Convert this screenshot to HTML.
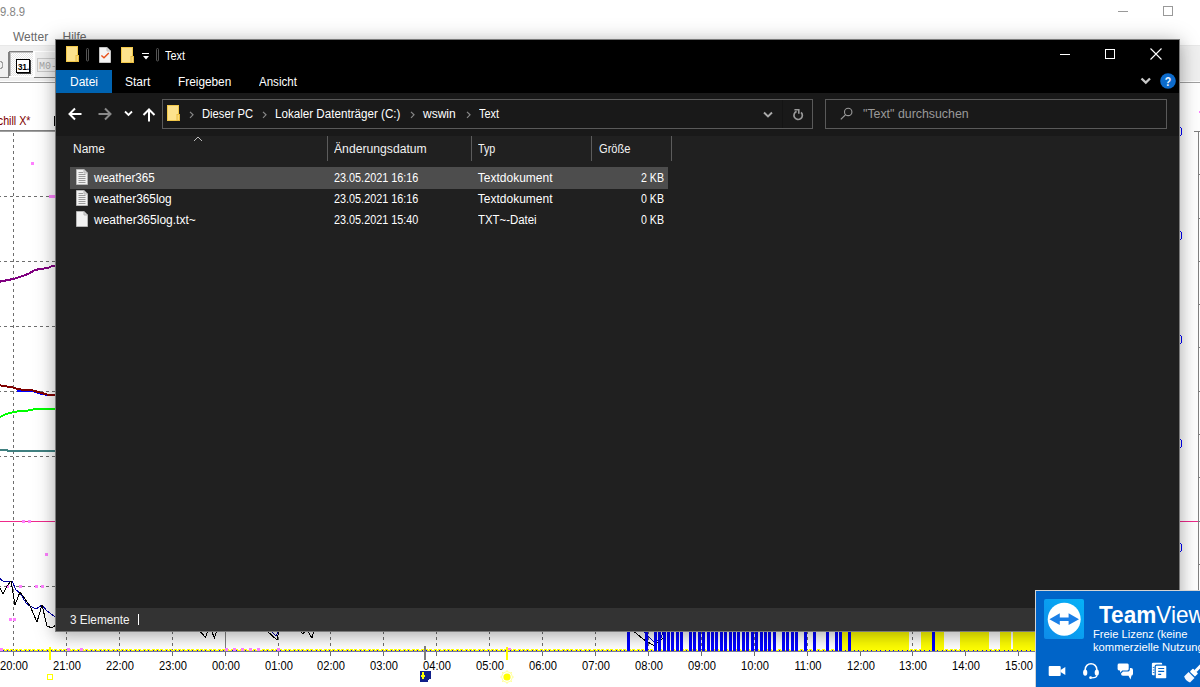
<!DOCTYPE html>
<html><head><meta charset="utf-8">
<style>
*{margin:0;padding:0;box-sizing:border-box}
html,body{width:1200px;height:687px;overflow:hidden;background:#fff;font-family:"Liberation Sans",sans-serif;}
.a{position:absolute;white-space:nowrap;overflow:visible}
#bg{position:absolute;left:0;top:0;width:1200px;height:687px;background:#fff;overflow:hidden}
#win{position:absolute;left:55px;top:39px;width:1125px;height:593px;background:#202020;border:1px solid #7a7a7a;box-shadow:0 2px 20px rgba(0,0,0,.28), 0 5px 12px rgba(0,0,0,.1)}
.t{position:absolute;white-space:nowrap;font-size:12px;line-height:14px}
</style></head><body>
<div id="bg">
<div class="a" style="left:-0.3px;top:5px;font-size:12px;line-height:14px;color:#858585;transform:scaleX(0.94);transform-origin:0 0">9.8.9</div>
<div class="a" style="left:1118px;top:11px;width:10px;height:1px;background:#999"></div>
<div class="a" style="left:1163px;top:6px;width:10px;height:10px;border:1px solid #999"></div>
<div class="a" style="left:13px;top:30px;font-size:12px;line-height:14px;color:#6a6a6a">Wetter</div>
<div class="a" style="left:62.5px;top:30px;font-size:12px;line-height:14px;color:#6a6a6a">Hilfe</div>
<div class="a" style="left:0;top:45px;width:1200px;height:37px;background:#f0f0f0;border-top:1px solid #e8e8e8"></div>
<div class="a" style="left:0;top:81px;width:1200px;height:1px;background:#fff"></div>
<div class="a" style="left:0;top:82px;width:1200px;height:1px;background:#a0a0a0"></div>
<svg class="a" style="left:0;top:0" width="1200" height="687" viewBox="0 0 1200 687" shape-rendering="crispEdges"><rect x="-5" y="52" width="13" height="25" fill="#f0f0f0"/><path d="M8.5 52V77.5H-5" fill="none" stroke="#808080"/><circle cx="-0.5" cy="65" r="3.5" fill="none" stroke="#a0a0a0"/><defs><pattern id="chk" width="2" height="2" patternUnits="userSpaceOnUse"><rect width="2" height="2" fill="#fff"/><rect width="1" height="1" fill="#e4e4e4"/><rect x="1" y="1" width="1" height="1" fill="#e4e4e4"/></pattern></defs><rect x="9" y="51" width="25" height="26" fill="url(#chk)"/><path d="M9.5 77V51.5H34" fill="none" stroke="#808080"/><path d="M10.5 76V52.5H33" fill="none" stroke="#c0c0c0"/><path d="M9 76.5H33.5V51" fill="none" stroke="#fff"/><rect x="16.5" y="59.5" width="13" height="13" fill="#fff" stroke="#000" stroke-width="1.3"/><path d="M17 73.5H30.5V60" fill="none" stroke="#404040" stroke-width="1"/><text x="23.3" y="69.6" font-family="Liberation Sans" font-weight="700" font-size="8.6" fill="#000" text-anchor="middle" letter-spacing="-0.3">31.</text><path d="M34.5 77V51.5H60" fill="none" stroke="#fff"/><path d="M34 77.5H60" fill="none" stroke="#808080"/><rect x="37.5" y="58.5" width="30" height="13" fill="#eee" stroke="#c8c8c8"/><text x="39" y="69" font-family="Liberation Mono" font-size="10" fill="#a8a8a8">M0-S</text><text transform="translate(-2.2 125) scale(0.87 1)" font-family="Liberation Sans" font-size="12.3" fill="#800000">chill X*</text><rect x="54.5" y="116.5" width="4" height="9" fill="#602060" stroke="#000"/><rect x="0" y="130" width="1180" height="1" fill="#808080"/><rect x="0" y="131" width="1180" height="1" fill="#a0a0a0"/><path d="M13.5 133V650" stroke="#6e6e6e" stroke-dasharray="3 3"/><path d="M13.5 652V656" stroke="#6e6e6e"/><path d="M66.5 133V650" stroke="#6e6e6e" stroke-dasharray="3 3"/><path d="M66.5 652V656" stroke="#6e6e6e"/><path d="M119.5 133V650" stroke="#6e6e6e" stroke-dasharray="3 3"/><path d="M119.5 652V656" stroke="#6e6e6e"/><path d="M172.5 133V650" stroke="#6e6e6e" stroke-dasharray="3 3"/><path d="M172.5 652V656" stroke="#6e6e6e"/><path d="M225.5 132V650" stroke="#808080"/><path d="M225.5 652V656" stroke="#6e6e6e"/><path d="M278.5 133V650" stroke="#6e6e6e" stroke-dasharray="3 3"/><path d="M278.5 652V656" stroke="#6e6e6e"/><path d="M330.5 133V650" stroke="#6e6e6e" stroke-dasharray="3 3"/><path d="M330.5 652V656" stroke="#6e6e6e"/><path d="M383.5 133V650" stroke="#6e6e6e" stroke-dasharray="3 3"/><path d="M383.5 652V656" stroke="#6e6e6e"/><path d="M436.5 133V650" stroke="#6e6e6e" stroke-dasharray="3 3"/><path d="M436.5 652V656" stroke="#6e6e6e"/><path d="M489.5 133V650" stroke="#6e6e6e" stroke-dasharray="3 3"/><path d="M489.5 652V656" stroke="#6e6e6e"/><path d="M542.5 133V650" stroke="#6e6e6e" stroke-dasharray="3 3"/><path d="M542.5 652V656" stroke="#6e6e6e"/><path d="M595.5 133V650" stroke="#6e6e6e" stroke-dasharray="3 3"/><path d="M595.5 652V656" stroke="#6e6e6e"/><path d="M648.5 133V650" stroke="#6e6e6e" stroke-dasharray="3 3"/><path d="M648.5 652V656" stroke="#6e6e6e"/><path d="M701.5 133V650" stroke="#6e6e6e" stroke-dasharray="3 3"/><path d="M701.5 652V656" stroke="#6e6e6e"/><path d="M754.5 133V650" stroke="#6e6e6e" stroke-dasharray="3 3"/><path d="M754.5 652V656" stroke="#6e6e6e"/><path d="M807.5 133V650" stroke="#6e6e6e" stroke-dasharray="3 3"/><path d="M807.5 652V656" stroke="#6e6e6e"/><path d="M860.5 133V650" stroke="#6e6e6e" stroke-dasharray="3 3"/><path d="M860.5 652V656" stroke="#6e6e6e"/><path d="M912.5 133V650" stroke="#6e6e6e" stroke-dasharray="3 3"/><path d="M912.5 652V656" stroke="#6e6e6e"/><path d="M965.5 133V650" stroke="#6e6e6e" stroke-dasharray="3 3"/><path d="M965.5 652V656" stroke="#6e6e6e"/><path d="M1018.5 133V650" stroke="#6e6e6e" stroke-dasharray="3 3"/><path d="M1018.5 652V656" stroke="#6e6e6e"/><path d="M-2 196.5H1180" stroke="#6e6e6e" stroke-dasharray="3 3"/><path d="M-2 261.5H1180" stroke="#6e6e6e" stroke-dasharray="3 3"/><path d="M-2 326.5H1180" stroke="#6e6e6e" stroke-dasharray="3 3"/><path d="M-2 391.5H1180" stroke="#6e6e6e" stroke-dasharray="3 3"/><path d="M-2 456.5H1180" stroke="#6e6e6e" stroke-dasharray="3 3"/><path d="M-2 586.5H1180" stroke="#6e6e6e" stroke-dasharray="3 3"/><path d="M0 521.5H1200" stroke="#ee2a8a"/><rect x="31" y="162" width="3" height="3" fill="#ff80ff"/><rect x="49" y="195" width="3" height="3" fill="#ff80ff"/><rect x="52" y="195" width="3" height="3" fill="#ff80ff"/><rect x="22" y="520" width="3" height="3" fill="#ff80ff"/><rect x="28" y="520" width="3" height="3" fill="#ff80ff"/><rect x="45" y="553" width="3" height="3" fill="#ff80ff"/><rect x="6" y="585" width="3" height="3" fill="#ff80ff"/><rect x="19" y="585" width="3" height="3" fill="#ff80ff"/><rect x="35" y="585" width="3" height="3" fill="#ff80ff"/><rect x="41" y="585" width="3" height="3" fill="#ff80ff"/><rect x="9" y="618" width="3" height="3" fill="#ff80ff"/><rect x="13" y="618" width="3" height="3" fill="#ff80ff"/><polyline points="-2,282 13,279 20,277 28,274 35,270 40,269 48,268 52,266 58,265" fill="none" stroke="#800080" stroke-width="2"/><polyline points="17,390.5 33,391 40,393.5 47,395 58,395.5" fill="none" stroke="#0000ff" stroke-width="2"/><polyline points="-2,385 13,387.5 17,389 25,390 33,390.5 40,392.5 47,394.5 58,395.5" fill="none" stroke="#800000" stroke-width="2"/><polyline points="-2,418 5,414.5 10,413 17,411.5 25,411 33,409.5 40,409 58,409" fill="none" stroke="#00ff00" stroke-width="2"/><polyline points="-2,450 7,450 8,451 58,451" fill="none" stroke="#408080" stroke-width="2"/><polyline points="-1,578 3,581 10,582 12,581 16,590 20,593 26,603 30,606 36,609 42,605 47,611 58,619" fill="none" stroke="#0000a0" stroke-width="1"/><polyline points="-1,586 3,594 7,586 11,581 15,605 20,592 30,606 37,622 42,605 47,626 52,628 58,623" fill="none" stroke="#000" stroke-width="1"/><polyline points="199,630 205.5,637.5 208,630" fill="none" stroke="#000"/><polyline points="211,630 214.5,638 217,630" fill="none" stroke="#000"/><polyline points="270,630 276,636 279,630" fill="none" stroke="#0000a0"/><polyline points="266,630 277,640 279,630" fill="none" stroke="#000"/><polyline points="298,630 303,633.5 307,630 312,638 314,630" fill="none" stroke="#000"/><polyline points="632,630 645,640.5 654,645.5 663,638 666,630" fill="none" stroke="#000"/><polyline points="642,630 654,642 660,640 664,630" fill="none" stroke="#0000c0"/><rect x="842" y="631" width="6" height="19" fill="#ffff00"/><rect x="851" y="631" width="58" height="19" fill="#ffff00"/><rect x="921" y="631" width="11" height="19" fill="#ffff00"/><rect x="935" y="631" width="9" height="19" fill="#ffff00"/><rect x="960" y="631" width="29" height="19" fill="#ffff00"/><rect x="1000" y="631" width="11" height="19" fill="#ffff00"/><rect x="1013" y="631" width="187" height="19" fill="#ffff00"/><rect x="0" y="650" width="1200" height="1" fill="#ffff00"/><rect x="0" y="651" width="1200" height="1" fill="#7a7a9a"/><rect x="-3" y="649" width="3" height="1" fill="#ffff00"/><rect x="-2" y="650" width="1" height="1" fill="#0000ff"/><rect x="2" y="649" width="3" height="1" fill="#ffff00"/><rect x="3" y="650" width="1" height="1" fill="#0000ff"/><rect x="6" y="649" width="3" height="1" fill="#ffff00"/><rect x="7" y="650" width="1" height="1" fill="#0000ff"/><rect x="10" y="649" width="3" height="1" fill="#ffff00"/><rect x="11" y="650" width="1" height="1" fill="#0000ff"/><rect x="15" y="649" width="3" height="1" fill="#ffff00"/><rect x="16" y="650" width="1" height="1" fill="#0000ff"/><rect x="19" y="649" width="3" height="1" fill="#ffff00"/><rect x="20" y="650" width="1" height="1" fill="#0000ff"/><rect x="24" y="649" width="3" height="1" fill="#ffff00"/><rect x="25" y="650" width="1" height="1" fill="#0000ff"/><rect x="28" y="649" width="3" height="1" fill="#ffff00"/><rect x="29" y="650" width="1" height="1" fill="#0000ff"/><rect x="32" y="649" width="3" height="1" fill="#ffff00"/><rect x="33" y="650" width="1" height="1" fill="#0000ff"/><rect x="37" y="649" width="3" height="1" fill="#ffff00"/><rect x="38" y="650" width="1" height="1" fill="#0000ff"/><rect x="41" y="649" width="3" height="1" fill="#ffff00"/><rect x="42" y="650" width="1" height="1" fill="#0000ff"/><rect x="46" y="649" width="3" height="1" fill="#ffff00"/><rect x="47" y="650" width="1" height="1" fill="#0000ff"/><rect x="50" y="649" width="3" height="1" fill="#ffff00"/><rect x="51" y="650" width="1" height="1" fill="#0000ff"/><rect x="54" y="649" width="3" height="1" fill="#ffff00"/><rect x="55" y="650" width="1" height="1" fill="#0000ff"/><rect x="59" y="649" width="3" height="1" fill="#ffff00"/><rect x="60" y="650" width="1" height="1" fill="#0000ff"/><rect x="63" y="649" width="3" height="1" fill="#ffff00"/><rect x="64" y="650" width="1" height="1" fill="#0000ff"/><rect x="68" y="649" width="3" height="1" fill="#ffff00"/><rect x="69" y="650" width="1" height="1" fill="#0000ff"/><rect x="72" y="649" width="3" height="1" fill="#ffff00"/><rect x="73" y="650" width="1" height="1" fill="#0000ff"/><rect x="77" y="649" width="3" height="1" fill="#ffff00"/><rect x="78" y="650" width="1" height="1" fill="#0000ff"/><rect x="81" y="649" width="3" height="1" fill="#ffff00"/><rect x="82" y="650" width="1" height="1" fill="#0000ff"/><rect x="85" y="649" width="3" height="1" fill="#ffff00"/><rect x="86" y="650" width="1" height="1" fill="#0000ff"/><rect x="90" y="649" width="3" height="1" fill="#ffff00"/><rect x="91" y="650" width="1" height="1" fill="#0000ff"/><rect x="94" y="649" width="3" height="1" fill="#ffff00"/><rect x="95" y="650" width="1" height="1" fill="#0000ff"/><rect x="99" y="649" width="3" height="1" fill="#ffff00"/><rect x="100" y="650" width="1" height="1" fill="#0000ff"/><rect x="103" y="649" width="3" height="1" fill="#ffff00"/><rect x="104" y="650" width="1" height="1" fill="#0000ff"/><rect x="107" y="649" width="3" height="1" fill="#ffff00"/><rect x="108" y="650" width="1" height="1" fill="#0000ff"/><rect x="112" y="649" width="3" height="1" fill="#ffff00"/><rect x="113" y="650" width="1" height="1" fill="#0000ff"/><rect x="116" y="649" width="3" height="1" fill="#ffff00"/><rect x="117" y="650" width="1" height="1" fill="#0000ff"/><rect x="121" y="649" width="3" height="1" fill="#ffff00"/><rect x="122" y="650" width="1" height="1" fill="#0000ff"/><rect x="125" y="649" width="3" height="1" fill="#ffff00"/><rect x="126" y="650" width="1" height="1" fill="#0000ff"/><rect x="129" y="649" width="3" height="1" fill="#ffff00"/><rect x="130" y="650" width="1" height="1" fill="#0000ff"/><rect x="134" y="649" width="3" height="1" fill="#ffff00"/><rect x="135" y="650" width="1" height="1" fill="#0000ff"/><rect x="138" y="649" width="3" height="1" fill="#ffff00"/><rect x="139" y="650" width="1" height="1" fill="#0000ff"/><rect x="143" y="649" width="3" height="1" fill="#ffff00"/><rect x="144" y="650" width="1" height="1" fill="#0000ff"/><rect x="147" y="649" width="3" height="1" fill="#ffff00"/><rect x="148" y="650" width="1" height="1" fill="#0000ff"/><rect x="152" y="649" width="3" height="1" fill="#ffff00"/><rect x="153" y="650" width="1" height="1" fill="#0000ff"/><rect x="156" y="649" width="3" height="1" fill="#ffff00"/><rect x="157" y="650" width="1" height="1" fill="#0000ff"/><rect x="160" y="649" width="3" height="1" fill="#ffff00"/><rect x="161" y="650" width="1" height="1" fill="#0000ff"/><rect x="165" y="649" width="3" height="1" fill="#ffff00"/><rect x="166" y="650" width="1" height="1" fill="#0000ff"/><rect x="169" y="649" width="3" height="1" fill="#ffff00"/><rect x="170" y="650" width="1" height="1" fill="#0000ff"/><rect x="174" y="649" width="3" height="1" fill="#ffff00"/><rect x="175" y="650" width="1" height="1" fill="#0000ff"/><rect x="178" y="649" width="3" height="1" fill="#ffff00"/><rect x="179" y="650" width="1" height="1" fill="#0000ff"/><rect x="182" y="649" width="3" height="1" fill="#ffff00"/><rect x="183" y="650" width="1" height="1" fill="#0000ff"/><rect x="187" y="649" width="3" height="1" fill="#ffff00"/><rect x="188" y="650" width="1" height="1" fill="#0000ff"/><rect x="191" y="649" width="3" height="1" fill="#ffff00"/><rect x="192" y="650" width="1" height="1" fill="#0000ff"/><rect x="196" y="649" width="3" height="1" fill="#ffff00"/><rect x="197" y="650" width="1" height="1" fill="#0000ff"/><rect x="200" y="649" width="3" height="1" fill="#ffff00"/><rect x="201" y="650" width="1" height="1" fill="#0000ff"/><rect x="204" y="649" width="3" height="1" fill="#ffff00"/><rect x="205" y="650" width="1" height="1" fill="#0000ff"/><rect x="209" y="649" width="3" height="1" fill="#ffff00"/><rect x="210" y="650" width="1" height="1" fill="#0000ff"/><rect x="213" y="649" width="3" height="1" fill="#ffff00"/><rect x="214" y="650" width="1" height="1" fill="#0000ff"/><rect x="218" y="649" width="3" height="1" fill="#ffff00"/><rect x="219" y="650" width="1" height="1" fill="#0000ff"/><rect x="222" y="649" width="3" height="1" fill="#ffff00"/><rect x="223" y="650" width="1" height="1" fill="#0000ff"/><rect x="226" y="649" width="3" height="1" fill="#ffff00"/><rect x="227" y="650" width="1" height="1" fill="#0000ff"/><rect x="231" y="649" width="3" height="1" fill="#ffff00"/><rect x="232" y="650" width="1" height="1" fill="#0000ff"/><rect x="235" y="649" width="3" height="1" fill="#ffff00"/><rect x="236" y="650" width="1" height="1" fill="#0000ff"/><rect x="240" y="649" width="3" height="1" fill="#ffff00"/><rect x="241" y="650" width="1" height="1" fill="#0000ff"/><rect x="244" y="649" width="3" height="1" fill="#ffff00"/><rect x="245" y="650" width="1" height="1" fill="#0000ff"/><rect x="249" y="649" width="3" height="1" fill="#ffff00"/><rect x="250" y="650" width="1" height="1" fill="#0000ff"/><rect x="253" y="649" width="3" height="1" fill="#ffff00"/><rect x="254" y="650" width="1" height="1" fill="#0000ff"/><rect x="257" y="649" width="3" height="1" fill="#ffff00"/><rect x="258" y="650" width="1" height="1" fill="#0000ff"/><rect x="262" y="649" width="3" height="1" fill="#ffff00"/><rect x="263" y="650" width="1" height="1" fill="#0000ff"/><rect x="266" y="649" width="3" height="1" fill="#ffff00"/><rect x="267" y="650" width="1" height="1" fill="#0000ff"/><rect x="271" y="649" width="3" height="1" fill="#ffff00"/><rect x="272" y="650" width="1" height="1" fill="#0000ff"/><rect x="275" y="649" width="3" height="1" fill="#ffff00"/><rect x="276" y="650" width="1" height="1" fill="#0000ff"/><rect x="279" y="649" width="3" height="1" fill="#ffff00"/><rect x="280" y="650" width="1" height="1" fill="#0000ff"/><rect x="284" y="649" width="3" height="1" fill="#ffff00"/><rect x="285" y="650" width="1" height="1" fill="#0000ff"/><rect x="288" y="649" width="3" height="1" fill="#ffff00"/><rect x="289" y="650" width="1" height="1" fill="#0000ff"/><rect x="293" y="649" width="3" height="1" fill="#ffff00"/><rect x="294" y="650" width="1" height="1" fill="#0000ff"/><rect x="297" y="649" width="3" height="1" fill="#ffff00"/><rect x="298" y="650" width="1" height="1" fill="#0000ff"/><rect x="301" y="649" width="3" height="1" fill="#ffff00"/><rect x="302" y="650" width="1" height="1" fill="#0000ff"/><rect x="306" y="649" width="3" height="1" fill="#ffff00"/><rect x="307" y="650" width="1" height="1" fill="#0000ff"/><rect x="310" y="649" width="3" height="1" fill="#ffff00"/><rect x="311" y="650" width="1" height="1" fill="#0000ff"/><rect x="315" y="649" width="3" height="1" fill="#ffff00"/><rect x="316" y="650" width="1" height="1" fill="#0000ff"/><rect x="319" y="649" width="3" height="1" fill="#ffff00"/><rect x="320" y="650" width="1" height="1" fill="#0000ff"/><rect x="324" y="649" width="3" height="1" fill="#ffff00"/><rect x="325" y="650" width="1" height="1" fill="#0000ff"/><rect x="328" y="649" width="3" height="1" fill="#ffff00"/><rect x="329" y="650" width="1" height="1" fill="#0000ff"/><rect x="332" y="649" width="3" height="1" fill="#ffff00"/><rect x="333" y="650" width="1" height="1" fill="#0000ff"/><rect x="337" y="649" width="3" height="1" fill="#ffff00"/><rect x="338" y="650" width="1" height="1" fill="#0000ff"/><rect x="341" y="649" width="3" height="1" fill="#ffff00"/><rect x="342" y="650" width="1" height="1" fill="#0000ff"/><rect x="346" y="649" width="3" height="1" fill="#ffff00"/><rect x="347" y="650" width="1" height="1" fill="#0000ff"/><rect x="350" y="649" width="3" height="1" fill="#ffff00"/><rect x="351" y="650" width="1" height="1" fill="#0000ff"/><rect x="354" y="649" width="3" height="1" fill="#ffff00"/><rect x="355" y="650" width="1" height="1" fill="#0000ff"/><rect x="359" y="649" width="3" height="1" fill="#ffff00"/><rect x="360" y="650" width="1" height="1" fill="#0000ff"/><rect x="363" y="649" width="3" height="1" fill="#ffff00"/><rect x="364" y="650" width="1" height="1" fill="#0000ff"/><rect x="368" y="649" width="3" height="1" fill="#ffff00"/><rect x="369" y="650" width="1" height="1" fill="#0000ff"/><rect x="372" y="649" width="3" height="1" fill="#ffff00"/><rect x="373" y="650" width="1" height="1" fill="#0000ff"/><rect x="376" y="649" width="3" height="1" fill="#ffff00"/><rect x="377" y="650" width="1" height="1" fill="#0000ff"/><rect x="381" y="649" width="3" height="1" fill="#ffff00"/><rect x="382" y="650" width="1" height="1" fill="#0000ff"/><rect x="385" y="649" width="3" height="1" fill="#ffff00"/><rect x="386" y="650" width="1" height="1" fill="#0000ff"/><rect x="390" y="649" width="3" height="1" fill="#ffff00"/><rect x="391" y="650" width="1" height="1" fill="#0000ff"/><rect x="394" y="649" width="3" height="1" fill="#ffff00"/><rect x="395" y="650" width="1" height="1" fill="#0000ff"/><rect x="398" y="649" width="3" height="1" fill="#ffff00"/><rect x="399" y="650" width="1" height="1" fill="#0000ff"/><rect x="403" y="649" width="3" height="1" fill="#ffff00"/><rect x="404" y="650" width="1" height="1" fill="#0000ff"/><rect x="407" y="649" width="3" height="1" fill="#ffff00"/><rect x="408" y="650" width="1" height="1" fill="#0000ff"/><rect x="412" y="649" width="3" height="1" fill="#ffff00"/><rect x="413" y="650" width="1" height="1" fill="#0000ff"/><rect x="416" y="649" width="3" height="1" fill="#ffff00"/><rect x="417" y="650" width="1" height="1" fill="#0000ff"/><rect x="421" y="649" width="3" height="1" fill="#ffff00"/><rect x="422" y="650" width="1" height="1" fill="#0000ff"/><rect x="425" y="649" width="3" height="1" fill="#ffff00"/><rect x="426" y="650" width="1" height="1" fill="#0000ff"/><rect x="429" y="649" width="3" height="1" fill="#ffff00"/><rect x="430" y="650" width="1" height="1" fill="#0000ff"/><rect x="434" y="649" width="3" height="1" fill="#ffff00"/><rect x="435" y="650" width="1" height="1" fill="#0000ff"/><rect x="438" y="649" width="3" height="1" fill="#ffff00"/><rect x="439" y="650" width="1" height="1" fill="#0000ff"/><rect x="443" y="649" width="3" height="1" fill="#ffff00"/><rect x="444" y="650" width="1" height="1" fill="#0000ff"/><rect x="447" y="649" width="3" height="1" fill="#ffff00"/><rect x="448" y="650" width="1" height="1" fill="#0000ff"/><rect x="451" y="649" width="3" height="1" fill="#ffff00"/><rect x="452" y="650" width="1" height="1" fill="#0000ff"/><rect x="456" y="649" width="3" height="1" fill="#ffff00"/><rect x="457" y="650" width="1" height="1" fill="#0000ff"/><rect x="460" y="649" width="3" height="1" fill="#ffff00"/><rect x="461" y="650" width="1" height="1" fill="#0000ff"/><rect x="465" y="649" width="3" height="1" fill="#ffff00"/><rect x="466" y="650" width="1" height="1" fill="#0000ff"/><rect x="469" y="649" width="3" height="1" fill="#ffff00"/><rect x="470" y="650" width="1" height="1" fill="#0000ff"/><rect x="473" y="649" width="3" height="1" fill="#ffff00"/><rect x="474" y="650" width="1" height="1" fill="#0000ff"/><rect x="478" y="649" width="3" height="1" fill="#ffff00"/><rect x="479" y="650" width="1" height="1" fill="#0000ff"/><rect x="482" y="649" width="3" height="1" fill="#ffff00"/><rect x="483" y="650" width="1" height="1" fill="#0000ff"/><rect x="487" y="649" width="3" height="1" fill="#ffff00"/><rect x="488" y="650" width="1" height="1" fill="#0000ff"/><rect x="491" y="649" width="3" height="1" fill="#ffff00"/><rect x="492" y="650" width="1" height="1" fill="#0000ff"/><rect x="495" y="649" width="3" height="1" fill="#ffff00"/><rect x="496" y="650" width="1" height="1" fill="#0000ff"/><rect x="500" y="649" width="3" height="1" fill="#ffff00"/><rect x="501" y="650" width="1" height="1" fill="#0000ff"/><rect x="504" y="649" width="3" height="1" fill="#ffff00"/><rect x="505" y="650" width="1" height="1" fill="#0000ff"/><rect x="509" y="649" width="3" height="1" fill="#ffff00"/><rect x="510" y="650" width="1" height="1" fill="#0000ff"/><rect x="513" y="649" width="3" height="1" fill="#ffff00"/><rect x="514" y="650" width="1" height="1" fill="#0000ff"/><rect x="518" y="649" width="3" height="1" fill="#ffff00"/><rect x="519" y="650" width="1" height="1" fill="#0000ff"/><rect x="522" y="649" width="3" height="1" fill="#ffff00"/><rect x="523" y="650" width="1" height="1" fill="#0000ff"/><rect x="526" y="649" width="3" height="1" fill="#ffff00"/><rect x="527" y="650" width="1" height="1" fill="#0000ff"/><rect x="531" y="649" width="3" height="1" fill="#ffff00"/><rect x="532" y="650" width="1" height="1" fill="#0000ff"/><rect x="535" y="649" width="3" height="1" fill="#ffff00"/><rect x="536" y="650" width="1" height="1" fill="#0000ff"/><rect x="540" y="649" width="3" height="1" fill="#ffff00"/><rect x="541" y="650" width="1" height="1" fill="#0000ff"/><rect x="544" y="649" width="3" height="1" fill="#ffff00"/><rect x="545" y="650" width="1" height="1" fill="#0000ff"/><rect x="548" y="649" width="3" height="1" fill="#ffff00"/><rect x="549" y="650" width="1" height="1" fill="#0000ff"/><rect x="553" y="649" width="3" height="1" fill="#ffff00"/><rect x="554" y="650" width="1" height="1" fill="#0000ff"/><rect x="557" y="649" width="3" height="1" fill="#ffff00"/><rect x="558" y="650" width="1" height="1" fill="#0000ff"/><rect x="562" y="649" width="3" height="1" fill="#ffff00"/><rect x="563" y="650" width="1" height="1" fill="#0000ff"/><rect x="566" y="649" width="3" height="1" fill="#ffff00"/><rect x="567" y="650" width="1" height="1" fill="#0000ff"/><rect x="570" y="649" width="3" height="1" fill="#ffff00"/><rect x="571" y="650" width="1" height="1" fill="#0000ff"/><rect x="575" y="649" width="3" height="1" fill="#ffff00"/><rect x="576" y="650" width="1" height="1" fill="#0000ff"/><rect x="579" y="649" width="3" height="1" fill="#ffff00"/><rect x="580" y="650" width="1" height="1" fill="#0000ff"/><rect x="584" y="649" width="3" height="1" fill="#ffff00"/><rect x="585" y="650" width="1" height="1" fill="#0000ff"/><rect x="588" y="649" width="3" height="1" fill="#ffff00"/><rect x="589" y="650" width="1" height="1" fill="#0000ff"/><rect x="593" y="649" width="3" height="1" fill="#ffff00"/><rect x="594" y="650" width="1" height="1" fill="#0000ff"/><rect x="597" y="649" width="3" height="1" fill="#ffff00"/><rect x="598" y="650" width="1" height="1" fill="#0000ff"/><rect x="601" y="649" width="3" height="1" fill="#ffff00"/><rect x="602" y="650" width="1" height="1" fill="#0000ff"/><rect x="606" y="649" width="3" height="1" fill="#ffff00"/><rect x="607" y="650" width="1" height="1" fill="#0000ff"/><rect x="610" y="649" width="3" height="1" fill="#ffff00"/><rect x="611" y="650" width="1" height="1" fill="#0000ff"/><rect x="615" y="649" width="3" height="1" fill="#ffff00"/><rect x="616" y="650" width="1" height="1" fill="#0000ff"/><rect x="619" y="649" width="3" height="1" fill="#ffff00"/><rect x="620" y="650" width="1" height="1" fill="#0000ff"/><rect x="623" y="649" width="3" height="1" fill="#ffff00"/><rect x="624" y="650" width="1" height="1" fill="#0000ff"/><rect x="628" y="649" width="3" height="1" fill="#ffff00"/><rect x="629" y="650" width="1" height="1" fill="#0000ff"/><rect x="632" y="649" width="3" height="1" fill="#ffff00"/><rect x="633" y="650" width="1" height="1" fill="#0000ff"/><rect x="637" y="649" width="3" height="1" fill="#ffff00"/><rect x="638" y="650" width="1" height="1" fill="#0000ff"/><rect x="641" y="649" width="3" height="1" fill="#ffff00"/><rect x="642" y="650" width="1" height="1" fill="#0000ff"/><rect x="645" y="649" width="3" height="1" fill="#ffff00"/><rect x="646" y="650" width="1" height="1" fill="#0000ff"/><rect x="650" y="649" width="3" height="1" fill="#ffff00"/><rect x="651" y="650" width="1" height="1" fill="#0000ff"/><rect x="654" y="649" width="3" height="1" fill="#ffff00"/><rect x="655" y="650" width="1" height="1" fill="#0000ff"/><rect x="659" y="649" width="3" height="1" fill="#ffff00"/><rect x="660" y="650" width="1" height="1" fill="#0000ff"/><rect x="663" y="649" width="3" height="1" fill="#ffff00"/><rect x="664" y="650" width="1" height="1" fill="#0000ff"/><rect x="667" y="649" width="3" height="1" fill="#ffff00"/><rect x="668" y="650" width="1" height="1" fill="#0000ff"/><rect x="672" y="649" width="3" height="1" fill="#ffff00"/><rect x="673" y="650" width="1" height="1" fill="#0000ff"/><rect x="676" y="649" width="3" height="1" fill="#ffff00"/><rect x="677" y="650" width="1" height="1" fill="#0000ff"/><rect x="681" y="649" width="3" height="1" fill="#ffff00"/><rect x="682" y="650" width="1" height="1" fill="#0000ff"/><rect x="685" y="649" width="3" height="1" fill="#ffff00"/><rect x="686" y="650" width="1" height="1" fill="#0000ff"/><rect x="690" y="649" width="3" height="1" fill="#ffff00"/><rect x="691" y="650" width="1" height="1" fill="#0000ff"/><rect x="694" y="649" width="3" height="1" fill="#ffff00"/><rect x="695" y="650" width="1" height="1" fill="#0000ff"/><rect x="698" y="649" width="3" height="1" fill="#ffff00"/><rect x="699" y="650" width="1" height="1" fill="#0000ff"/><rect x="703" y="649" width="3" height="1" fill="#ffff00"/><rect x="704" y="650" width="1" height="1" fill="#0000ff"/><rect x="707" y="649" width="3" height="1" fill="#ffff00"/><rect x="708" y="650" width="1" height="1" fill="#0000ff"/><rect x="712" y="649" width="3" height="1" fill="#ffff00"/><rect x="713" y="650" width="1" height="1" fill="#0000ff"/><rect x="716" y="649" width="3" height="1" fill="#ffff00"/><rect x="717" y="650" width="1" height="1" fill="#0000ff"/><rect x="720" y="649" width="3" height="1" fill="#ffff00"/><rect x="721" y="650" width="1" height="1" fill="#0000ff"/><rect x="725" y="649" width="3" height="1" fill="#ffff00"/><rect x="726" y="650" width="1" height="1" fill="#0000ff"/><rect x="729" y="649" width="3" height="1" fill="#ffff00"/><rect x="730" y="650" width="1" height="1" fill="#0000ff"/><rect x="734" y="649" width="3" height="1" fill="#ffff00"/><rect x="735" y="650" width="1" height="1" fill="#0000ff"/><rect x="738" y="649" width="3" height="1" fill="#ffff00"/><rect x="739" y="650" width="1" height="1" fill="#0000ff"/><rect x="742" y="649" width="3" height="1" fill="#ffff00"/><rect x="743" y="650" width="1" height="1" fill="#0000ff"/><rect x="747" y="649" width="3" height="1" fill="#ffff00"/><rect x="748" y="650" width="1" height="1" fill="#0000ff"/><rect x="751" y="649" width="3" height="1" fill="#ffff00"/><rect x="752" y="650" width="1" height="1" fill="#0000ff"/><rect x="756" y="649" width="3" height="1" fill="#ffff00"/><rect x="757" y="650" width="1" height="1" fill="#0000ff"/><rect x="760" y="649" width="3" height="1" fill="#ffff00"/><rect x="761" y="650" width="1" height="1" fill="#0000ff"/><rect x="765" y="649" width="3" height="1" fill="#ffff00"/><rect x="766" y="650" width="1" height="1" fill="#0000ff"/><rect x="769" y="649" width="3" height="1" fill="#ffff00"/><rect x="770" y="650" width="1" height="1" fill="#0000ff"/><rect x="773" y="649" width="3" height="1" fill="#ffff00"/><rect x="774" y="650" width="1" height="1" fill="#0000ff"/><rect x="778" y="649" width="3" height="1" fill="#ffff00"/><rect x="779" y="650" width="1" height="1" fill="#0000ff"/><rect x="782" y="649" width="3" height="1" fill="#ffff00"/><rect x="783" y="650" width="1" height="1" fill="#0000ff"/><rect x="787" y="649" width="3" height="1" fill="#ffff00"/><rect x="788" y="650" width="1" height="1" fill="#0000ff"/><rect x="791" y="649" width="3" height="1" fill="#ffff00"/><rect x="792" y="650" width="1" height="1" fill="#0000ff"/><rect x="795" y="649" width="3" height="1" fill="#ffff00"/><rect x="796" y="650" width="1" height="1" fill="#0000ff"/><rect x="800" y="649" width="3" height="1" fill="#ffff00"/><rect x="801" y="650" width="1" height="1" fill="#0000ff"/><rect x="804" y="649" width="3" height="1" fill="#ffff00"/><rect x="805" y="650" width="1" height="1" fill="#0000ff"/><rect x="809" y="649" width="3" height="1" fill="#ffff00"/><rect x="810" y="650" width="1" height="1" fill="#0000ff"/><rect x="813" y="649" width="3" height="1" fill="#ffff00"/><rect x="814" y="650" width="1" height="1" fill="#0000ff"/><rect x="817" y="649" width="3" height="1" fill="#ffff00"/><rect x="818" y="650" width="1" height="1" fill="#0000ff"/><rect x="822" y="649" width="3" height="1" fill="#ffff00"/><rect x="823" y="650" width="1" height="1" fill="#0000ff"/><rect x="826" y="649" width="3" height="1" fill="#ffff00"/><rect x="827" y="650" width="1" height="1" fill="#0000ff"/><rect x="831" y="649" width="3" height="1" fill="#ffff00"/><rect x="832" y="650" width="1" height="1" fill="#0000ff"/><rect x="835" y="649" width="3" height="1" fill="#ffff00"/><rect x="836" y="650" width="1" height="1" fill="#0000ff"/><rect x="839" y="649" width="3" height="1" fill="#ffff00"/><rect x="840" y="650" width="1" height="1" fill="#0000ff"/><rect x="844" y="649" width="3" height="1" fill="#ffff00"/><rect x="845" y="650" width="1" height="1" fill="#0000ff"/><rect x="848" y="649" width="3" height="1" fill="#ffff00"/><rect x="849" y="650" width="1" height="1" fill="#0000ff"/><rect x="853" y="649" width="3" height="1" fill="#ffff00"/><rect x="854" y="650" width="1" height="1" fill="#0000ff"/><rect x="857" y="649" width="3" height="1" fill="#ffff00"/><rect x="858" y="650" width="1" height="1" fill="#0000ff"/><rect x="862" y="649" width="3" height="1" fill="#ffff00"/><rect x="863" y="650" width="1" height="1" fill="#0000ff"/><rect x="866" y="649" width="3" height="1" fill="#ffff00"/><rect x="867" y="650" width="1" height="1" fill="#0000ff"/><rect x="870" y="649" width="3" height="1" fill="#ffff00"/><rect x="871" y="650" width="1" height="1" fill="#0000ff"/><rect x="875" y="649" width="3" height="1" fill="#ffff00"/><rect x="876" y="650" width="1" height="1" fill="#0000ff"/><rect x="879" y="649" width="3" height="1" fill="#ffff00"/><rect x="880" y="650" width="1" height="1" fill="#0000ff"/><rect x="884" y="649" width="3" height="1" fill="#ffff00"/><rect x="885" y="650" width="1" height="1" fill="#0000ff"/><rect x="888" y="649" width="3" height="1" fill="#ffff00"/><rect x="889" y="650" width="1" height="1" fill="#0000ff"/><rect x="892" y="649" width="3" height="1" fill="#ffff00"/><rect x="893" y="650" width="1" height="1" fill="#0000ff"/><rect x="897" y="649" width="3" height="1" fill="#ffff00"/><rect x="898" y="650" width="1" height="1" fill="#0000ff"/><rect x="901" y="649" width="3" height="1" fill="#ffff00"/><rect x="902" y="650" width="1" height="1" fill="#0000ff"/><rect x="906" y="649" width="3" height="1" fill="#ffff00"/><rect x="907" y="650" width="1" height="1" fill="#0000ff"/><rect x="910" y="649" width="3" height="1" fill="#ffff00"/><rect x="911" y="650" width="1" height="1" fill="#0000ff"/><rect x="914" y="649" width="3" height="1" fill="#ffff00"/><rect x="915" y="650" width="1" height="1" fill="#0000ff"/><rect x="919" y="649" width="3" height="1" fill="#ffff00"/><rect x="920" y="650" width="1" height="1" fill="#0000ff"/><rect x="923" y="649" width="3" height="1" fill="#ffff00"/><rect x="924" y="650" width="1" height="1" fill="#0000ff"/><rect x="928" y="649" width="3" height="1" fill="#ffff00"/><rect x="929" y="650" width="1" height="1" fill="#0000ff"/><rect x="932" y="649" width="3" height="1" fill="#ffff00"/><rect x="933" y="650" width="1" height="1" fill="#0000ff"/><rect x="936" y="649" width="3" height="1" fill="#ffff00"/><rect x="937" y="650" width="1" height="1" fill="#0000ff"/><rect x="941" y="649" width="3" height="1" fill="#ffff00"/><rect x="942" y="650" width="1" height="1" fill="#0000ff"/><rect x="945" y="649" width="3" height="1" fill="#ffff00"/><rect x="946" y="650" width="1" height="1" fill="#0000ff"/><rect x="950" y="649" width="3" height="1" fill="#ffff00"/><rect x="951" y="650" width="1" height="1" fill="#0000ff"/><rect x="954" y="649" width="3" height="1" fill="#ffff00"/><rect x="955" y="650" width="1" height="1" fill="#0000ff"/><rect x="959" y="649" width="3" height="1" fill="#ffff00"/><rect x="960" y="650" width="1" height="1" fill="#0000ff"/><rect x="963" y="649" width="3" height="1" fill="#ffff00"/><rect x="964" y="650" width="1" height="1" fill="#0000ff"/><rect x="967" y="649" width="3" height="1" fill="#ffff00"/><rect x="968" y="650" width="1" height="1" fill="#0000ff"/><rect x="972" y="649" width="3" height="1" fill="#ffff00"/><rect x="973" y="650" width="1" height="1" fill="#0000ff"/><rect x="976" y="649" width="3" height="1" fill="#ffff00"/><rect x="977" y="650" width="1" height="1" fill="#0000ff"/><rect x="981" y="649" width="3" height="1" fill="#ffff00"/><rect x="982" y="650" width="1" height="1" fill="#0000ff"/><rect x="985" y="649" width="3" height="1" fill="#ffff00"/><rect x="986" y="650" width="1" height="1" fill="#0000ff"/><rect x="989" y="649" width="3" height="1" fill="#ffff00"/><rect x="990" y="650" width="1" height="1" fill="#0000ff"/><rect x="994" y="649" width="3" height="1" fill="#ffff00"/><rect x="995" y="650" width="1" height="1" fill="#0000ff"/><rect x="998" y="649" width="3" height="1" fill="#ffff00"/><rect x="999" y="650" width="1" height="1" fill="#0000ff"/><rect x="1003" y="649" width="3" height="1" fill="#ffff00"/><rect x="1004" y="650" width="1" height="1" fill="#0000ff"/><rect x="1007" y="649" width="3" height="1" fill="#ffff00"/><rect x="1008" y="650" width="1" height="1" fill="#0000ff"/><rect x="1011" y="649" width="3" height="1" fill="#ffff00"/><rect x="1012" y="650" width="1" height="1" fill="#0000ff"/><rect x="1016" y="649" width="3" height="1" fill="#ffff00"/><rect x="1017" y="650" width="1" height="1" fill="#0000ff"/><rect x="1020" y="649" width="3" height="1" fill="#ffff00"/><rect x="1021" y="650" width="1" height="1" fill="#0000ff"/><rect x="1025" y="649" width="3" height="1" fill="#ffff00"/><rect x="1026" y="650" width="1" height="1" fill="#0000ff"/><rect x="1029" y="649" width="3" height="1" fill="#ffff00"/><rect x="1030" y="650" width="1" height="1" fill="#0000ff"/><rect x="1034" y="649" width="3" height="1" fill="#ffff00"/><rect x="1035" y="650" width="1" height="1" fill="#0000ff"/><rect x="1038" y="649" width="3" height="1" fill="#ffff00"/><rect x="1039" y="650" width="1" height="1" fill="#0000ff"/><rect x="1042" y="649" width="3" height="1" fill="#ffff00"/><rect x="1043" y="650" width="1" height="1" fill="#0000ff"/><rect x="1047" y="649" width="3" height="1" fill="#ffff00"/><rect x="1048" y="650" width="1" height="1" fill="#0000ff"/><rect x="1051" y="649" width="3" height="1" fill="#ffff00"/><rect x="1052" y="650" width="1" height="1" fill="#0000ff"/><rect x="1056" y="649" width="3" height="1" fill="#ffff00"/><rect x="1057" y="650" width="1" height="1" fill="#0000ff"/><rect x="1060" y="649" width="3" height="1" fill="#ffff00"/><rect x="1061" y="650" width="1" height="1" fill="#0000ff"/><rect x="1064" y="649" width="3" height="1" fill="#ffff00"/><rect x="1065" y="650" width="1" height="1" fill="#0000ff"/><rect x="1069" y="649" width="3" height="1" fill="#ffff00"/><rect x="1070" y="650" width="1" height="1" fill="#0000ff"/><rect x="1073" y="649" width="3" height="1" fill="#ffff00"/><rect x="1074" y="650" width="1" height="1" fill="#0000ff"/><rect x="1078" y="649" width="3" height="1" fill="#ffff00"/><rect x="1079" y="650" width="1" height="1" fill="#0000ff"/><rect x="1082" y="649" width="3" height="1" fill="#ffff00"/><rect x="1083" y="650" width="1" height="1" fill="#0000ff"/><rect x="1086" y="649" width="3" height="1" fill="#ffff00"/><rect x="1087" y="650" width="1" height="1" fill="#0000ff"/><rect x="1091" y="649" width="3" height="1" fill="#ffff00"/><rect x="1092" y="650" width="1" height="1" fill="#0000ff"/><rect x="1095" y="649" width="3" height="1" fill="#ffff00"/><rect x="1096" y="650" width="1" height="1" fill="#0000ff"/><rect x="1100" y="649" width="3" height="1" fill="#ffff00"/><rect x="1101" y="650" width="1" height="1" fill="#0000ff"/><rect x="1104" y="649" width="3" height="1" fill="#ffff00"/><rect x="1105" y="650" width="1" height="1" fill="#0000ff"/><rect x="1108" y="649" width="3" height="1" fill="#ffff00"/><rect x="1109" y="650" width="1" height="1" fill="#0000ff"/><rect x="1113" y="649" width="3" height="1" fill="#ffff00"/><rect x="1114" y="650" width="1" height="1" fill="#0000ff"/><rect x="1117" y="649" width="3" height="1" fill="#ffff00"/><rect x="1118" y="650" width="1" height="1" fill="#0000ff"/><rect x="1122" y="649" width="3" height="1" fill="#ffff00"/><rect x="1123" y="650" width="1" height="1" fill="#0000ff"/><rect x="1126" y="649" width="3" height="1" fill="#ffff00"/><rect x="1127" y="650" width="1" height="1" fill="#0000ff"/><rect x="1131" y="649" width="3" height="1" fill="#ffff00"/><rect x="1132" y="650" width="1" height="1" fill="#0000ff"/><rect x="1135" y="649" width="3" height="1" fill="#ffff00"/><rect x="1136" y="650" width="1" height="1" fill="#0000ff"/><rect x="1139" y="649" width="3" height="1" fill="#ffff00"/><rect x="1140" y="650" width="1" height="1" fill="#0000ff"/><rect x="1144" y="649" width="3" height="1" fill="#ffff00"/><rect x="1145" y="650" width="1" height="1" fill="#0000ff"/><rect x="1148" y="649" width="3" height="1" fill="#ffff00"/><rect x="1149" y="650" width="1" height="1" fill="#0000ff"/><rect x="1153" y="649" width="3" height="1" fill="#ffff00"/><rect x="1154" y="650" width="1" height="1" fill="#0000ff"/><rect x="1157" y="649" width="3" height="1" fill="#ffff00"/><rect x="1158" y="650" width="1" height="1" fill="#0000ff"/><rect x="1161" y="649" width="3" height="1" fill="#ffff00"/><rect x="1162" y="650" width="1" height="1" fill="#0000ff"/><rect x="1166" y="649" width="3" height="1" fill="#ffff00"/><rect x="1167" y="650" width="1" height="1" fill="#0000ff"/><rect x="1170" y="649" width="3" height="1" fill="#ffff00"/><rect x="1171" y="650" width="1" height="1" fill="#0000ff"/><rect x="1175" y="649" width="3" height="1" fill="#ffff00"/><rect x="1176" y="650" width="1" height="1" fill="#0000ff"/><rect x="1179" y="649" width="3" height="1" fill="#ffff00"/><rect x="1180" y="650" width="1" height="1" fill="#0000ff"/><rect x="1183" y="649" width="3" height="1" fill="#ffff00"/><rect x="1184" y="650" width="1" height="1" fill="#0000ff"/><rect x="1188" y="649" width="3" height="1" fill="#ffff00"/><rect x="1189" y="650" width="1" height="1" fill="#0000ff"/><rect x="1192" y="649" width="3" height="1" fill="#ffff00"/><rect x="1193" y="650" width="1" height="1" fill="#0000ff"/><rect x="1197" y="649" width="3" height="1" fill="#ffff00"/><rect x="1198" y="650" width="1" height="1" fill="#0000ff"/><rect x="1201" y="649" width="3" height="1" fill="#ffff00"/><rect x="1202" y="650" width="1" height="1" fill="#0000ff"/><rect x="627" y="631" width="3" height="20" fill="#0000ff"/><rect x="645" y="631" width="3" height="20" fill="#0000ff"/><rect x="654" y="631" width="3" height="20" fill="#0000ff"/><rect x="658" y="631" width="3" height="20" fill="#0000ff"/><rect x="663" y="631" width="3" height="20" fill="#0000ff"/><rect x="667" y="631" width="3" height="20" fill="#0000ff"/><rect x="671" y="631" width="3" height="20" fill="#0000ff"/><rect x="676" y="631" width="3" height="20" fill="#0000ff"/><rect x="680" y="631" width="3" height="20" fill="#0000ff"/><rect x="689" y="631" width="3" height="20" fill="#0000ff"/><rect x="693" y="631" width="3" height="20" fill="#0000ff"/><rect x="698" y="631" width="3" height="20" fill="#0000ff"/><rect x="702" y="631" width="3" height="20" fill="#0000ff"/><rect x="707" y="631" width="3" height="20" fill="#0000ff"/><rect x="711" y="631" width="3" height="20" fill="#0000ff"/><rect x="715" y="631" width="3" height="20" fill="#0000ff"/><rect x="720" y="631" width="3" height="20" fill="#0000ff"/><rect x="724" y="631" width="3" height="20" fill="#0000ff"/><rect x="729" y="631" width="3" height="20" fill="#0000ff"/><rect x="733" y="631" width="3" height="20" fill="#0000ff"/><rect x="737" y="631" width="3" height="20" fill="#0000ff"/><rect x="742" y="631" width="3" height="20" fill="#0000ff"/><rect x="746" y="631" width="3" height="20" fill="#0000ff"/><rect x="751" y="631" width="3" height="20" fill="#0000ff"/><rect x="755" y="631" width="3" height="20" fill="#0000ff"/><rect x="760" y="631" width="3" height="20" fill="#0000ff"/><rect x="764" y="631" width="3" height="20" fill="#0000ff"/><rect x="768" y="631" width="3" height="20" fill="#0000ff"/><rect x="773" y="631" width="3" height="20" fill="#0000ff"/><rect x="782" y="631" width="3" height="20" fill="#0000ff"/><rect x="786" y="631" width="3" height="20" fill="#0000ff"/><rect x="791" y="631" width="3" height="20" fill="#0000ff"/><rect x="795" y="631" width="3" height="20" fill="#0000ff"/><rect x="804" y="631" width="3" height="20" fill="#0000ff"/><rect x="813" y="631" width="3" height="20" fill="#0000ff"/><rect x="826" y="631" width="3" height="20" fill="#0000ff"/><rect x="835" y="631" width="3" height="20" fill="#0000ff"/><rect x="839" y="631" width="3" height="20" fill="#0000ff"/><rect x="848" y="631" width="3" height="20" fill="#0000ff"/><rect x="932" y="631" width="3" height="20" fill="#0000ff"/><rect x="225" y="648" width="3" height="3" fill="#ff80ff"/><rect x="233" y="648" width="3" height="3" fill="#ff80ff"/><rect x="241" y="648" width="3" height="3" fill="#ff80ff"/><rect x="249" y="648" width="3" height="3" fill="#ff80ff"/><rect x="257" y="648" width="3" height="3" fill="#ff80ff"/><rect x="277" y="648" width="3" height="3" fill="#ff80ff"/><rect x="0" y="648" width="3" height="3" fill="#ff80ff"/><rect x="67" y="648" width="3" height="3" fill="#ff80ff"/><rect x="80" y="648" width="3" height="3" fill="#ff80ff"/><rect x="49" y="647" width="2" height="13" fill="#ffff00"/><rect x="47.5" y="674.5" width="5" height="5" fill="none" stroke="#ffff00"/><rect x="506" y="647" width="2" height="13" fill="#ffff00"/><rect x="424" y="646" width="2" height="14" fill="#808080"/><rect x="420" y="671" width="11" height="11" fill="#10208a"/><path d="M423 672V677M421 675.5L423 678L425 675.5" stroke="#ffff00" stroke-width="1.6" fill="none"/><circle cx="430" cy="681" r="2" fill="#fff"/><g shape-rendering="auto"><path d="M507 671.5L511 673L512.5 677L511 681L507 682.5L503 681L501.5 677L503 673Z" fill="none" stroke="#ffffa0" stroke-width="1"/><path d="M507 670V672M507 682V684M500 677H502M512 677H514M502 672L503.5 673.5M512 672L510.5 673.5M502 682L503.5 680.5M512 682L510.5 680.5" stroke="#ffffa0"/><circle cx="507" cy="677" r="3.6" fill="#ffff00"/></g><rect x="508" y="648" width="3" height="2" fill="#ff80ff"/><text transform="translate(14.0 670) scale(0.9 1)" font-family="Liberation Sans" font-size="12.4" fill="#000" text-anchor="middle">20:00</text><text transform="translate(67.0 670) scale(0.9 1)" font-family="Liberation Sans" font-size="12.4" fill="#000" text-anchor="middle">21:00</text><text transform="translate(120.0 670) scale(0.9 1)" font-family="Liberation Sans" font-size="12.4" fill="#000" text-anchor="middle">22:00</text><text transform="translate(173.0 670) scale(0.9 1)" font-family="Liberation Sans" font-size="12.4" fill="#000" text-anchor="middle">23:00</text><text transform="translate(226.0 670) scale(0.9 1)" font-family="Liberation Sans" font-size="12.4" fill="#000" text-anchor="middle">00:00</text><text transform="translate(279.0 670) scale(0.9 1)" font-family="Liberation Sans" font-size="12.4" fill="#000" text-anchor="middle">01:00</text><text transform="translate(331.0 670) scale(0.9 1)" font-family="Liberation Sans" font-size="12.4" fill="#000" text-anchor="middle">02:00</text><text transform="translate(384.0 670) scale(0.9 1)" font-family="Liberation Sans" font-size="12.4" fill="#000" text-anchor="middle">03:00</text><text transform="translate(437.0 670) scale(0.9 1)" font-family="Liberation Sans" font-size="12.4" fill="#000" text-anchor="middle">04:00</text><text transform="translate(490.0 670) scale(0.9 1)" font-family="Liberation Sans" font-size="12.4" fill="#000" text-anchor="middle">05:00</text><text transform="translate(543.0 670) scale(0.9 1)" font-family="Liberation Sans" font-size="12.4" fill="#000" text-anchor="middle">06:00</text><text transform="translate(596.0 670) scale(0.9 1)" font-family="Liberation Sans" font-size="12.4" fill="#000" text-anchor="middle">07:00</text><text transform="translate(649.0 670) scale(0.9 1)" font-family="Liberation Sans" font-size="12.4" fill="#000" text-anchor="middle">08:00</text><text transform="translate(702.0 670) scale(0.9 1)" font-family="Liberation Sans" font-size="12.4" fill="#000" text-anchor="middle">09:00</text><text transform="translate(755.0 670) scale(0.9 1)" font-family="Liberation Sans" font-size="12.4" fill="#000" text-anchor="middle">10:00</text><text transform="translate(808.0 670) scale(0.9 1)" font-family="Liberation Sans" font-size="12.4" fill="#000" text-anchor="middle">11:00</text><text transform="translate(861.0 670) scale(0.9 1)" font-family="Liberation Sans" font-size="12.4" fill="#000" text-anchor="middle">12:00</text><text transform="translate(913.0 670) scale(0.9 1)" font-family="Liberation Sans" font-size="12.4" fill="#000" text-anchor="middle">13:00</text><text transform="translate(966.0 670) scale(0.9 1)" font-family="Liberation Sans" font-size="12.4" fill="#000" text-anchor="middle">14:00</text><text transform="translate(1019.0 670) scale(0.9 1)" font-family="Liberation Sans" font-size="12.4" fill="#000" text-anchor="middle">15:00</text><path d="M1194 131.5H1200M1198.5 131V687" stroke="#808080"/><path d="M1198 174.5H1200" stroke="#808080"/><path d="M1198 218.5H1200" stroke="#808080"/><path d="M1198 261.5H1200" stroke="#808080"/><path d="M1198 304.5H1200" stroke="#808080"/><path d="M1198 347.5H1200" stroke="#808080"/><path d="M1198 391.5H1200" stroke="#808080"/><path d="M1198 434.5H1200" stroke="#808080"/><path d="M1198 477.5H1200" stroke="#808080"/><path d="M1198 521.5H1200" stroke="#808080"/><path d="M1198 564.5H1200" stroke="#808080"/><path d="M1198 608.5H1200" stroke="#808080"/><path d="M1198 651.5H1200" stroke="#808080"/><path d="M1178 127.5H1181M1181.5 128V135M1178 135.5H1181" stroke="#0000ff"/><path d="M1178 231.5H1181M1181.5 232V239M1178 239.5H1181" stroke="#0000ff"/><path d="M1178 335.5H1181M1181.5 336V343M1178 343.5H1181" stroke="#0000ff"/><path d="M1178 439.5H1181M1181.5 440V447M1178 447.5H1181" stroke="#0000ff"/><path d="M1178 543.5H1181M1181.5 544V551M1178 551.5H1181" stroke="#0000ff"/><rect x="1199" y="111" width="1" height="2" fill="#ff80ff"/></svg>
</div>
<div id="win">
<div class="a" style="left:0px;top:0px;width:1123px;height:53px;background:#000"></div>
<svg class="a" style="left:10px;top:6px" width="14" height="17" viewBox="0 0 14 17"><rect x="0.5" y="0.5" width="11" height="15" fill="#fde28c" stroke="#f3c94a" stroke-width="1"/><rect x="10" y="9.5" width="2.5" height="6" fill="#fbdb7c" stroke="#e9bd42" stroke-width="1"/></svg>
<svg class="a" style="left:30px;top:8px" width="3" height="14" viewBox="0 0 3 14"><rect x="0.5" y="0.5" width="2" height="12.5" rx="1" fill="none" stroke="#555" stroke-width="1"/></svg>
<svg class="a" style="left:43px;top:7px" width="13" height="16" viewBox="0 0 13 16"><path d="M0.5 0.5H8L11.5 4V15.5H0.5Z" fill="#f4f4f4" stroke="#c4c4c4"/><path d="M8 0.5V4H11.5" fill="#ddd" stroke="#c4c4c4"/><path d="M2.4 8.4L5 10.8L9.8 6" fill="none" stroke="#e8531d" stroke-width="1.4"/></svg>
<svg class="a" style="left:65px;top:7px" width="14" height="17" viewBox="0 0 14 17"><rect x="0.5" y="0.5" width="11" height="15" fill="#fde28c" stroke="#f3c94a" stroke-width="1"/><rect x="10" y="9.5" width="2.5" height="6" fill="#fbdb7c" stroke="#e9bd42" stroke-width="1"/></svg>
<div class="a" style="left:86px;top:13px;width:7px;height:1px;background:#fff"></div>
<svg class="a" style="left:87px;top:16px" width="6" height="4" viewBox="0 0 6 4"><path d="M0 0H6L3 3.5Z" fill="#fff"/></svg>
<svg class="a" style="left:100px;top:8px" width="3" height="14" viewBox="0 0 3 14"><rect x="0.5" y="0.5" width="2" height="12.5" rx="1" fill="none" stroke="#555" stroke-width="1"/></svg>
<div class="t" style="left:109.00px;top:8.84px;color:#fff;font-size:12px;line-height:14.00px;font-weight:400;transform:scaleX(0.91);transform-origin:0 0;">Text</div>
<div class="a" style="left:1004px;top:14px;width:10px;height:1px;background:#fff"></div>
<div class="a" style="left:1049px;top:9px;width:10px;height:10px;border:1px solid #fff"></div>
<svg class="a" style="left:1094px;top:8px" width="12" height="12" viewBox="0 0 12 12"><path d="M0.5 0.5L11.5 11.5M11.5 0.5L0.5 11.5" stroke="#fff" stroke-width="1.1"/></svg>
<div class="a" style="left:0px;top:30px;width:56px;height:23px;background:#0063b1"></div>
<div class="t" style="left:14.00px;top:34.84px;color:#fff;font-size:12px;line-height:14.00px;font-weight:400;">Datei</div>
<div class="t" style="left:69.00px;top:34.84px;color:#fff;font-size:12px;line-height:14.00px;font-weight:400;">Start</div>
<div class="t" style="left:122.00px;top:34.84px;color:#fff;font-size:12px;line-height:14.00px;font-weight:400;transform:scaleX(0.986);transform-origin:0 0;">Freigeben</div>
<div class="t" style="left:203.00px;top:34.84px;color:#fff;font-size:12px;line-height:14.00px;font-weight:400;transform:scaleX(0.962);transform-origin:0 0;">Ansicht</div>
<svg class="a" style="left:1084px;top:37px" width="12" height="8" viewBox="0 0 12 8"><path d="M1.5 1.5L5.8 5.6L10 1.5" fill="none" stroke="#c8c8c8" stroke-width="2.3"/></svg>
<svg class="a" style="left:1104px;top:33px" width="16" height="16" viewBox="0 0 16 16"><circle cx="8" cy="8" r="7.8" fill="#0d6bcb"/><text x="8" y="12.6" font-family="Liberation Sans" font-weight="700" font-size="12.5" fill="#eef4ff" text-anchor="middle" transform="translate(8 0) scale(0.85 1) translate(-8 0)">?</text></svg>
<div class="a" style="left:0px;top:53px;width:1123px;height:43px;background:#191919"></div>
<svg class="a" style="left:12px;top:67px" width="14" height="14" viewBox="0 0 14 14"><path d="M13.5 7H1.5M7 1.5L1.5 7L7 12.5" fill="none" stroke="#fff" stroke-width="2"/></svg>
<svg class="a" style="left:42px;top:67px" width="14" height="14" viewBox="0 0 14 14"><path d="M0.5 7H12.5M7 1.5L12.5 7L7 12.5" fill="none" stroke="#8a8a8a" stroke-width="2"/></svg>
<svg class="a" style="left:68px;top:70px" width="9" height="7" viewBox="0 0 9 7"><path d="M1 1.5L4.5 5L8 1.5" fill="none" stroke="#fff" stroke-width="1.8"/></svg>
<svg class="a" style="left:86px;top:68px" width="14" height="14" viewBox="0 0 14 14"><path d="M7 13.5V1.5M1.5 7L7 1.5L12.5 7" fill="none" stroke="#fff" stroke-width="2"/></svg>
<div class="a" style="left:106px;top:59px;width:651px;height:30px;border:1px solid #5a5a5a"></div>
<div class="a" style="left:726px;top:60px;width:1px;height:28px;background:#141414"></div>
<svg class="a" style="left:111px;top:65px" width="14" height="17" viewBox="0 0 14 17"><rect x="0.5" y="0.5" width="11" height="15" fill="#fde28c" stroke="#f3c94a" stroke-width="1"/><rect x="10" y="9.5" width="2.5" height="6" fill="#fbdb7c" stroke="#e9bd42" stroke-width="1"/></svg>
<svg class="a" style="left:133px;top:71px" width="6" height="8" viewBox="0 0 6 8"><path d="M1 0.8L4 3.8L1 6.8" fill="none" stroke="#888" stroke-width="1.2"/></svg>
<svg class="a" style="left:206px;top:71px" width="6" height="8" viewBox="0 0 6 8"><path d="M1 0.8L4 3.8L1 6.8" fill="none" stroke="#888" stroke-width="1.2"/></svg>
<svg class="a" style="left:354px;top:71px" width="6" height="8" viewBox="0 0 6 8"><path d="M1 0.8L4 3.8L1 6.8" fill="none" stroke="#888" stroke-width="1.2"/></svg>
<svg class="a" style="left:410px;top:71px" width="6" height="8" viewBox="0 0 6 8"><path d="M1 0.8L4 3.8L1 6.8" fill="none" stroke="#888" stroke-width="1.2"/></svg>
<div class="t" style="left:145.50px;top:66.84px;color:#fff;font-size:12px;line-height:14.00px;font-weight:400;transform:scaleX(0.934);transform-origin:0 0;">Dieser PC</div>
<div class="t" style="left:219.00px;top:66.84px;color:#fff;font-size:12px;line-height:14.00px;font-weight:400;transform:scaleX(0.969);transform-origin:0 0;">Lokaler Datenträger (C:)</div>
<div class="t" style="left:367.00px;top:66.84px;color:#fff;font-size:12px;line-height:14.00px;font-weight:400;">wswin</div>
<div class="t" style="left:423.00px;top:66.84px;color:#fff;font-size:12px;line-height:14.00px;font-weight:400;transform:scaleX(0.91);transform-origin:0 0;">Text</div>
<svg class="a" style="left:707px;top:71px" width="11" height="8" viewBox="0 0 11 8"><path d="M1 1.5L5 5.5L9 1.5" fill="none" stroke="#aaa" stroke-width="1.9"/></svg>
<svg class="a" style="left:736px;top:68px" width="13" height="13" viewBox="0 0 13 13"><path d="M9.1 4.3A4.2 4.2 0 1 1 4.6 3.4" fill="none" stroke="#999" stroke-width="1.7"/><path d="M2.4 1.8H6.8V5.8" fill="none" stroke="#999" stroke-width="1.6"/></svg>
<div class="a" style="left:769px;top:59px;width:342px;height:30px;border:1px solid #5a5a5a"></div>
<svg class="a" style="left:783px;top:67px" width="15" height="15" viewBox="0 0 15 15"><circle cx="9.2" cy="4.9" r="3.7" fill="none" stroke="#9a9a9a" stroke-width="1.1"/><path d="M6.4 7.8L1.8 12.4" stroke="#9a9a9a" stroke-width="1.2"/></svg>
<div class="t" style="left:807.00px;top:66.84px;color:#999;font-size:12px;line-height:14.00px;font-weight:400;transform:scaleX(1.03);transform-origin:0 0;">"Text" durchsuchen</div>
<svg class="a" style="left:137px;top:96px" width="10" height="6" viewBox="0 0 10 6"><path d="M1 5L5 1L9 5" fill="none" stroke="#bbb" stroke-width="1"/></svg>
<div class="t" style="left:17.00px;top:101.84px;color:#f2f2f2;font-size:12px;line-height:14.00px;font-weight:400;">Name</div>
<div class="t" style="left:278.00px;top:101.84px;color:#f2f2f2;font-size:12px;line-height:14.00px;font-weight:400;transform:scaleX(1.015);transform-origin:0 0;">Änderungsdatum</div>
<div class="t" style="left:421.80px;top:101.84px;color:#f2f2f2;font-size:12px;line-height:14.00px;font-weight:400;transform:scaleX(0.895);transform-origin:0 0;">Typ</div>
<div class="t" style="left:542.80px;top:101.84px;color:#f2f2f2;font-size:12px;line-height:14.00px;font-weight:400;transform:scaleX(0.926);transform-origin:0 0;">Größe</div>
<div class="a" style="left:271px;top:96px;width:1px;height:25px;background:#5c5c5c"></div>
<div class="a" style="left:415px;top:96px;width:1px;height:25px;background:#5c5c5c"></div>
<div class="a" style="left:535px;top:96px;width:1px;height:25px;background:#5c5c5c"></div>
<div class="a" style="left:615px;top:96px;width:1px;height:25px;background:#5c5c5c"></div>
<div class="a" style="left:14px;top:127px;width:598px;height:22px;background:#4d4d4d"></div>
<svg class="a" style="left:20px;top:129px" width="12" height="16" viewBox="0 0 12 16"><path d="M0.5 0.5H8L11.5 4V15.5H0.5Z" fill="#f2f2f2" stroke="#b5b5b5"/><path d="M8 0.5V4H11.5" fill="#d8d8d8" stroke="#b5b5b5"/><path d="M2.5 3.5H7" stroke="#9a9a9a" stroke-width="1"/><path d="M2.5 5.5H9.5" stroke="#9a9a9a" stroke-width="1"/><path d="M2.5 7.5H9.5" stroke="#9a9a9a" stroke-width="1"/><path d="M2.5 9.5H9.5" stroke="#9a9a9a" stroke-width="1"/><path d="M2.5 11.5H9.5" stroke="#9a9a9a" stroke-width="1"/><path d="M2.5 13.5H9.5" stroke="#9a9a9a" stroke-width="1"/></svg>
<div class="t" style="left:38.00px;top:130.84px;color:#fff;font-size:12px;line-height:14.00px;font-weight:400;transform:scaleX(0.968);transform-origin:0 0;">weather365</div>
<div class="t" style="left:278.00px;top:130.84px;color:#fff;font-size:12px;line-height:14.00px;font-weight:400;transform:scaleX(0.903);transform-origin:0 0;">23.05.2021 16:16</div>
<div class="t" style="left:421.80px;top:130.84px;color:#fff;font-size:12px;line-height:14.00px;font-weight:400;">Textdokument</div>
<div class="t" style="left:584.70px;top:130.84px;color:#fff;font-size:12px;line-height:14.00px;font-weight:400;transform:scaleX(0.885);transform-origin:0 0;">2 KB</div>
<svg class="a" style="left:20px;top:150px" width="12" height="16" viewBox="0 0 12 16"><path d="M0.5 0.5H8L11.5 4V15.5H0.5Z" fill="#f2f2f2" stroke="#b5b5b5"/><path d="M8 0.5V4H11.5" fill="#d8d8d8" stroke="#b5b5b5"/><path d="M2.5 3.5H7" stroke="#9a9a9a" stroke-width="1"/><path d="M2.5 5.5H9.5" stroke="#9a9a9a" stroke-width="1"/><path d="M2.5 7.5H9.5" stroke="#9a9a9a" stroke-width="1"/><path d="M2.5 9.5H9.5" stroke="#9a9a9a" stroke-width="1"/><path d="M2.5 11.5H9.5" stroke="#9a9a9a" stroke-width="1"/><path d="M2.5 13.5H9.5" stroke="#9a9a9a" stroke-width="1"/></svg>
<div class="t" style="left:38.00px;top:151.84px;color:#fff;font-size:12px;line-height:14.00px;font-weight:400;transform:scaleX(0.987);transform-origin:0 0;">weather365log</div>
<div class="t" style="left:278.00px;top:151.84px;color:#fff;font-size:12px;line-height:14.00px;font-weight:400;transform:scaleX(0.903);transform-origin:0 0;">23.05.2021 16:16</div>
<div class="t" style="left:421.80px;top:151.84px;color:#fff;font-size:12px;line-height:14.00px;font-weight:400;">Textdokument</div>
<div class="t" style="left:584.70px;top:151.84px;color:#fff;font-size:12px;line-height:14.00px;font-weight:400;transform:scaleX(0.885);transform-origin:0 0;">0 KB</div>
<svg class="a" style="left:20px;top:171px" width="12" height="16" viewBox="0 0 12 16"><path d="M0.5 0.5H8L11.5 4V15.5H0.5Z" fill="#f2f2f2" stroke="#b5b5b5"/><path d="M8 0.5V4H11.5" fill="#d8d8d8" stroke="#b5b5b5"/></svg>
<div class="t" style="left:38.00px;top:172.84px;color:#fff;font-size:12px;line-height:14.00px;font-weight:400;">weather365log.txt~</div>
<div class="t" style="left:278.00px;top:172.84px;color:#fff;font-size:12px;line-height:14.00px;font-weight:400;transform:scaleX(0.903);transform-origin:0 0;">23.05.2021 15:40</div>
<div class="t" style="left:421.80px;top:172.84px;color:#fff;font-size:12px;line-height:14.00px;font-weight:400;transform:scaleX(0.951);transform-origin:0 0;">TXT~-Datei</div>
<div class="t" style="left:584.70px;top:172.84px;color:#fff;font-size:12px;line-height:14.00px;font-weight:400;transform:scaleX(0.885);transform-origin:0 0;">0 KB</div>
<div class="a" style="left:0px;top:568px;width:1123px;height:23px;background:#333"></div>
<div class="t" style="left:14.00px;top:572.84px;color:#f2f2f2;font-size:12px;line-height:14.00px;font-weight:400;transform:scaleX(0.983);transform-origin:0 0;">3 Elemente</div>
<div class="a" style="left:82px;top:574px;width:1px;height:11px;background:#fff"></div>

</div>
<div class="a" style="left:1035px;top:590px;width:170px;height:100px;background:#0064c8;border-left:1px solid #d4d4d4;border-top:1px solid #d4d4d4"></div>
<svg class="a" style="left:1044px;top:599px" width="40" height="40" viewBox="0 0 40 40">
<defs><linearGradient id="tvg" x1="0" y1="1" x2="1" y2="0"><stop offset="0" stop-color="#0e8ce9"/><stop offset="1" stop-color="#05b2f7"/></linearGradient></defs>
<rect x="0" y="0" width="40" height="40" rx="2" fill="url(#tvg)"/>
<circle cx="20.2" cy="20.2" r="16.5" fill="#fff"/>
<path d="M5.4 20.2L15.8 14.2V18.4H24.6V14.2L35 20.2L24.6 26V21.9H15.8V26Z" fill="#1a7fe6"/>
</svg>
<div class="a" style="left:1099px;top:601.5px;font-size:24px;line-height:26px;color:#fff;transform:scaleX(0.94);transform-origin:0 0"><b>Team</b>View</div>
<div class="a" style="left:1093px;top:627.8px;font-size:10.5px;line-height:12px;color:#fff;transform:scaleX(1.065);transform-origin:0 0">Freie Lizenz (keine</div>
<div class="a" style="left:1093px;top:640.6px;font-size:10.5px;line-height:12px;color:#fff;transform:scaleX(1.065);transform-origin:0 0">kommerzielle Nutzung)</div>
<svg class="a" style="left:1040px;top:655px" width="160" height="32" viewBox="0 0 160 32">
<rect x="8.7" y="10.9" width="12" height="10.1" rx="1" fill="#fff"/>
<path d="M20.5 15L25.3 12V20L20.5 17Z" fill="#fff"/>
<path d="M45.2 18V14.5A5.8 5.8 0 0 1 56.8 14.5V18" fill="none" stroke="#fff" stroke-width="1.5"/>
<ellipse cx="45.2" cy="17.6" rx="2.1" ry="3.2" fill="#fff"/>
<ellipse cx="56.8" cy="17.6" rx="2.1" ry="3.2" fill="#fff"/>
<path d="M57 20.4Q56.8 22.8 51.5 22.8" fill="none" stroke="#fff" stroke-width="1.2"/>
<circle cx="50.6" cy="22.7" r="1.4" fill="#fff"/>
<path d="M83 13H91A2 2 0 0 1 93 15V18.8A2 2 0 0 1 91 20.8H91.5L90.5 24.5L88.5 20.8H83A2 2 0 0 1 81 18.8V15A2 2 0 0 1 83 13Z" fill="#fff"/>
<path d="M79 8H87.3A2 2 0 0 1 89.3 10V14A2 2 0 0 1 87.3 16H82.5L79.5 19.5V16H79A2 2 0 0 1 77 14V10A2 2 0 0 1 79 8Z" fill="#fff" stroke="#0064c8" stroke-width="1.2"/>
<rect x="111.9" y="7.8" width="10.3" height="12.4" rx="1.2" fill="#fff"/>
<path d="M112.8 12.4H114.5M112.8 15H114.5M112.8 17.6H114.5" stroke="#0064c8" stroke-width="0.9"/>
<rect x="115.2" y="10.1" width="11.7" height="13.8" rx="1.3" fill="#fff" stroke="#0064c8" stroke-width="1.2"/>
<path d="M118.2 13.5H124.2M118.2 16.4H124.2M118.2 19.4H121.2" stroke="#0064c8" stroke-width="1.2"/>
<g transform="translate(154.5 17) rotate(45)">
<path d="M-4.2 4.2H4.2V10.5Q0 12.5 -4.2 10.5Z" fill="#f4f8ff"/>
<rect x="-3.6" y="-1.5" width="7.2" height="4.5" rx="0.8" fill="#fff"/>
<rect x="-1.5" y="-12" width="3" height="11" rx="1.2" fill="#fff"/>
<circle cx="0" cy="-11.5" r="2" fill="#fff"/>
</g>
</svg>
</body></html>
